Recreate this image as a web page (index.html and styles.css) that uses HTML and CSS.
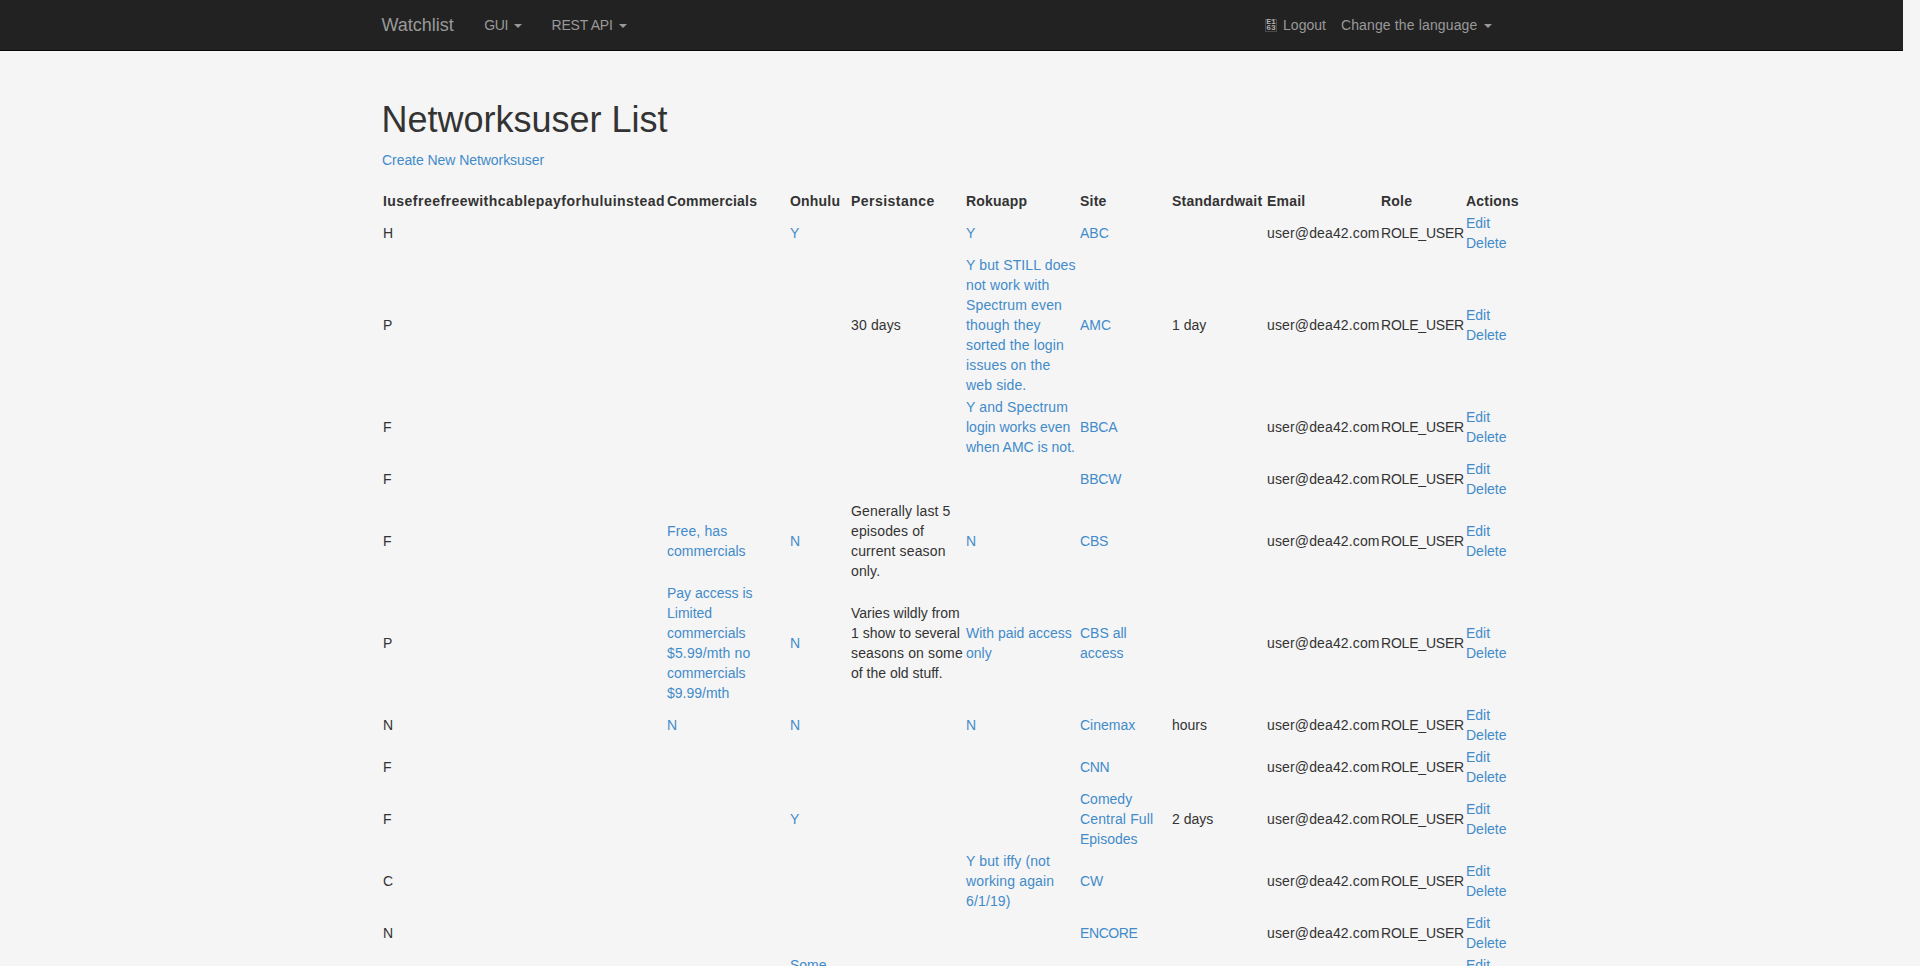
FILE: index.html
```html
<!DOCTYPE html>
<html lang="en">
<head>
<meta charset="utf-8">
<title>Networksuser List</title>
<link rel="stylesheet" href="styles.css">
</head>
<body>
<div class="page">
<nav class="navbar">
  <div class="container nav-row">
    <a class="brand" href="#">Watchlist</a>
    <ul class="nav">
      <li><a class="tighter" href="#">GUI <b class="caret"></b></a></li>
      <li><a class="tight" href="#">REST API <b class="caret gap"></b></a></li>
    </ul>
    <div class="nav-right">
      <a class="logout" href="#"><span class="codebox"><span>E1</span><span>63</span></span>Logout</a>
      <a class="wide" href="#">Change the language <b class="caret"></b></a>
    </div>
  </div>
</nav>
<main class="container content">
  <h1>Networksuser List</h1>
  <a class="create" href="#">Create New Networksuser</a>
  <table class="list">
    <colgroup>
      <col class="c-free"><col class="c-comm"><col class="c-hulu"><col class="c-pers"><col class="c-roku"><col class="c-site"><col class="c-wait"><col class="c-mail"><col class="c-role"><col class="c-act">
    </colgroup>
    <thead>
      <tr><th class="widest">Iusefreefreewithcablepayforhuluinstead</th><th>Commercials</th><th>Onhulu</th><th class="widest">Persistance</th><th>Rokuapp</th><th>Site</th><th>Standardwait</th><th>Email</th><th>Role</th><th>Actions</th></tr>
    </thead>
    <tbody>
      <tr><td>H</td><td></td><td><a href="#">Y</a></td><td></td><td><a href="#">Y</a></td><td><a href="#">ABC</a></td><td></td><td class="wide">user@dea42.com</td><td class="tight">ROLE_USER</td><td><a href="#">Edit</a><br><a href="#">Delete</a></td></tr>
      <tr><td>P</td><td></td><td></td><td class="wide">30 days</td><td class="wide"><a href="#">Y but STILL does<br>not work with<br>Spectrum even<br>though they<br>sorted the login<br>issues on the<br>web side.</a></td><td><a href="#">AMC</a></td><td>1 day</td><td class="wide">user@dea42.com</td><td class="tight">ROLE_USER</td><td><a href="#">Edit</a><br><a href="#">Delete</a></td></tr>
      <tr><td>F</td><td></td><td></td><td></td><td><a href="#"><span class="wide">Y and Spectrum</span><br>login works even<br>when AMC is not.</a></td><td class="tight"><a href="#">BBCA</a></td><td></td><td class="wide">user@dea42.com</td><td class="tight">ROLE_USER</td><td><a href="#">Edit</a><br><a href="#">Delete</a></td></tr>
      <tr><td>F</td><td></td><td></td><td></td><td></td><td class="tight"><a href="#">BBCW</a></td><td></td><td class="wide">user@dea42.com</td><td class="tight">ROLE_USER</td><td><a href="#">Edit</a><br><a href="#">Delete</a></td></tr>
      <tr><td>F</td><td><a href="#"><span class="wide">Free, has</span><br>commercials</a></td><td><a href="#">N</a></td><td class="wide">Generally last 5<br>episodes of<br>current season<br>only.</td><td><a href="#">N</a></td><td class="tight"><a href="#">CBS</a></td><td></td><td class="wide">user@dea42.com</td><td class="tight">ROLE_USER</td><td><a href="#">Edit</a><br><a href="#">Delete</a></td></tr>
      <tr><td>P</td><td><a href="#">Pay access is<br>Limited<br>commercials<br><span class="wide">$5.99/mth no</span><br>commercials<br>$9.99/mth</a></td><td><a href="#">N</a></td><td>Varies wildly from<br>1 show to several<br><span class="wide">seasons on some</span><br>of the old stuff.</td><td><a href="#">With paid access<br>only</a></td><td><a href="#">CBS all<br>access</a></td><td></td><td class="wide">user@dea42.com</td><td class="tight">ROLE_USER</td><td><a href="#">Edit</a><br><a href="#">Delete</a></td></tr>
      <tr><td>N</td><td><a href="#">N</a></td><td><a href="#">N</a></td><td></td><td><a href="#">N</a></td><td><a href="#">Cinemax</a></td><td>hours</td><td class="wide">user@dea42.com</td><td class="tight">ROLE_USER</td><td><a href="#">Edit</a><br><a href="#">Delete</a></td></tr>
      <tr><td>F</td><td></td><td></td><td></td><td></td><td class="tighter"><a href="#">CNN</a></td><td></td><td class="wide">user@dea42.com</td><td class="tight">ROLE_USER</td><td><a href="#">Edit</a><br><a href="#">Delete</a></td></tr>
      <tr><td>F</td><td></td><td><a href="#">Y</a></td><td></td><td></td><td><a href="#">Comedy<br><span class="wide">Central Full</span><br>Episodes</a></td><td>2 days</td><td class="wide">user@dea42.com</td><td class="tight">ROLE_USER</td><td><a href="#">Edit</a><br><a href="#">Delete</a></td></tr>
      <tr><td>C</td><td></td><td></td><td></td><td class="wide"><a href="#">Y but iffy (not<br>working again<br>6/1/19)</a></td><td><a href="#">CW</a></td><td></td><td class="wide">user@dea42.com</td><td class="tight">ROLE_USER</td><td><a href="#">Edit</a><br><a href="#">Delete</a></td></tr>
      <tr><td>N</td><td></td><td></td><td></td><td></td><td class="tighter"><a href="#">ENCORE</a></td><td></td><td class="wide">user@dea42.com</td><td class="tight">ROLE_USER</td><td><a href="#">Edit</a><br><a href="#">Delete</a></td></tr>
      <tr class="last"><td></td><td></td><td><a href="#">Some</a></td><td></td><td></td><td></td><td></td><td></td><td></td><td><a href="#">Edit</a></td></tr>
    </tbody>
  </table>
</main>
</div>
</body>
</html>
```
FILE: styles.css
```css
* { box-sizing: border-box; }
body {
  margin: 0;
  background: #f5f5f5;
  color: #333;
  font: 14px/20px "Liberation Sans", Arial, sans-serif;
}
a { color: #428bca; text-decoration: none; }
.page { width: 1903px; height: 966px; overflow: hidden; }
.container { width: 1170px; margin: 0 auto; padding: 0 15px; }

.navbar { height: 51px; background: #222; border-bottom: 1px solid #080808; }
.navbar a { color: #999; }
.nav-row { display: flex; height: 50px; align-items: center; }
.brand { font-size: 18px; margin-right: 15.5px; }
.nav { display: flex; margin: 0; padding: 0; list-style: none; }
.nav a { display: block; padding: 15px; }
.nav-right { display: flex; gap: 15px; margin-left: auto; padding-right: 30px; }
.nav-right a { height: 20px; }
.logout { display: flex; align-items: center; gap: 6px; }
.caret {
  display: inline-block;
  margin-left: 2px;
  vertical-align: middle;
  border-top: 4px solid #999;
  border-left: 4px solid transparent;
  border-right: 4px solid transparent;
}
.caret.gap { margin-left: 3px; }
.tight { letter-spacing: -0.2px; }
.tighter { letter-spacing: -0.4px; }
.wide { letter-spacing: 0.14px; }

/* hex-code box of the logout symbol */
.codebox {
  display: flex;
  flex-direction: column;
  align-items: center;
  justify-content: center;
  width: 12px;
  height: 13px;
  border: 1px solid #4a4a4a;
  color: #b0b0b0;
  font: bold 8px/6px "Liberation Mono", monospace;
}

.content { padding-top: 49px; }
h1 { margin: 0 0 10px; font-size: 36px; font-weight: 500; line-height: 1.1; }
.create { display: block; margin: 0 0 20px 0.5px; letter-spacing: -0.06px; }

.list { width: 1140px; margin-left: 0.5px; table-layout: fixed; border-collapse: collapse; }
.list th, .list td { padding: 1px; text-align: left; white-space: nowrap; }
.list th { letter-spacing: 0.2px; }
.list th.widest { letter-spacing: 0.46px; }
.last td { vertical-align: top; }
.c-free { width: 284px; }
.c-comm { width: 123px; }
.c-hulu { width: 61px; }
.c-pers { width: 115px; }
.c-roku { width: 114px; }
.c-site { width: 92px; }
.c-wait { width: 95px; }
.c-mail { width: 114px; }
.c-role { width: 85px; }
.c-act { width: 57px; }
```
